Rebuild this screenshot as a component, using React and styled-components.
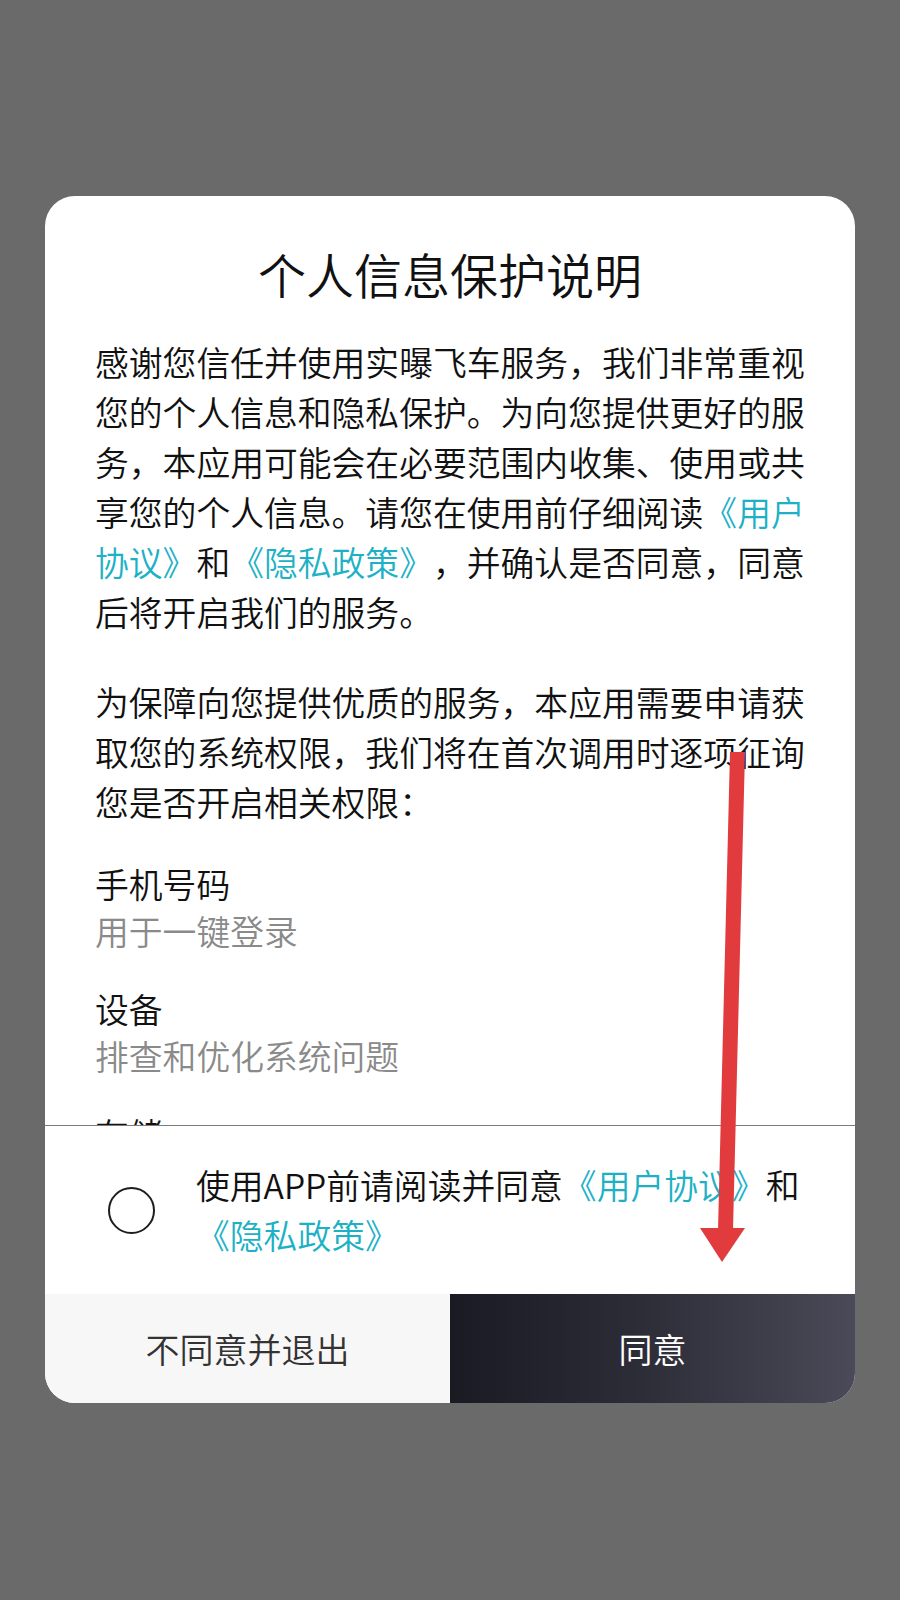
import React from "react";
import styled, { createGlobalStyle } from "styled-components";

const Global = createGlobalStyle`
  html, body { margin: 0; padding: 0; background: #6a6a6a; }
  body {
    font-family: "Noto Sans CJK SC", "Noto Sans", sans-serif;
    text-spacing-trim: space-all;
    font-feature-settings: "chws" 0, "halt" 0;
  }
  * { box-sizing: border-box; }
`;

const Page = styled.div`
  position: relative;
  width: 900px;
  height: 1600px;
  overflow: hidden;
  background: #6a6a6a;
  padding-top: 196px;
  padding-left: 45px;
`;

const Card = styled.div`
  width: 810px;
  height: 1207px;
  background: #fff;
  border-radius: 30px;
  overflow: hidden;
  display: flex;
  flex-direction: column;
`;

const Title = styled.h1`
  margin: 0;
  padding-top: 47px;
  font-size: 48px;
  line-height: 60px;
  font-weight: 350;
  color: #111;
  text-align: center;
`;

const Body = styled.div`
  margin-top: 34px;
  padding: 0 50px;
  height: 788px;
  overflow: hidden;
  flex-shrink: 0;
`;

const Para = styled.p`
  margin: ${(p) => (p.$first ? "0" : "40px")} 0 0;
  font-size: 33.8px;
  line-height: 50px;
  font-weight: 350;
  color: #111;
`;

const Link = styled.span`
  color: #1db1c6;
`;

const PermList = styled.div`
  margin-top: 33px;
  display: flex;
  flex-direction: column;
  gap: 31px;
`;

const PermItem = styled.div`
  display: flex;
  flex-direction: column;
`;

const PermName = styled.div`
  font-size: 33.8px;
  line-height: 47px;
  font-weight: 350;
  color: #111;
`;

const PermDesc = styled.div`
  font-size: 33.8px;
  line-height: 47px;
  font-weight: 350;
  color: #8a8a8a;
`;

const Divider = styled.div`
  height: 1px;
  background: #7c7c7c;
  flex-shrink: 0;
`;

const Footer = styled.div`
  flex: 1;
  display: flex;
  align-items: center;
  padding-left: 63px;
  padding-right: 50px;
  gap: 41px;
`;

const Radio = styled.div`
  width: 47px;
  height: 47px;
  border-radius: 50%;
  border: 2.5px solid #1e1e1e;
  flex-shrink: 0;
`;

const FooterText = styled.div`
  flex: 1;
  font-size: 33.8px;
  line-height: 50px;
  font-weight: 350;
  color: #111;
`;

const Buttons = styled.div`
  height: 109px;
  display: flex;
  flex-shrink: 0;
`;

const Button = styled.div`
  flex: 1;
  display: flex;
  align-items: center;
  justify-content: center;
  font-size: 34px;
  font-weight: 350;
  color: ${(p) => (p.$primary ? "#fff" : "#333")};
  background: ${(p) =>
    p.$primary ? "linear-gradient(90deg, #1a1a23 0%, #2c2c37 45%, #4a4a58 100%)" : "#f7f7f7"};
`;

const ArrowSvg = styled.svg`
  position: absolute;
  left: 695px;
  top: 748px;
  pointer-events: none;
`;

export default function App() {
  const perms = [
    ["手机号码", "用于一键登录"],
    ["设备", "排查和优化系统问题"],
    ["存储", "保存和读取应用数据"],
  ];
  return (
    <>
      <Global />
      <Page>
        <Card>
          <Title>个人信息保护说明</Title>
          <Body>
            <Para $first>
              感谢您信任并使用实曝飞车服务，我们非常重视您的个人信息和隐私保护。为向您提供更好的服务，本应用可能会在必要范围内收集、使用或共享您的个人信息。请您在使用前仔细阅读
              <Link>《用户协议》</Link>和<Link>《隐私政策》</Link>
              ，并确认是否同意，同意后将开启我们的服务。
            </Para>
            <Para>
              为保障向您提供优质的服务，本应用需要申请获取您的系统权限，我们将在首次调用时逐项征询您是否开启相关权限：
            </Para>
            <PermList>
              {perms.map(([n, d]) => (
                <PermItem key={n}>
                  <PermName>{n}</PermName>
                  <PermDesc>{d}</PermDesc>
                </PermItem>
              ))}
            </PermList>
          </Body>
          <Divider />
          <Footer>
            <Radio />
            <FooterText>
              使用APP前请阅读并同意<Link>《用户协议》</Link>和<Link>《隐私政策》</Link>
            </FooterText>
          </Footer>
          <Buttons>
            <Button>不同意并退出</Button>
            <Button $primary>同意</Button>
          </Buttons>
        </Card>
        <ArrowSvg width="56" height="520" viewBox="0 0 56 520">
          <polygon points="35,4 50,4 38,482 23,482" fill="#e23b3e" />
          <polygon points="5,480 50,480 27,514" fill="#e23b3e" />
        </ArrowSvg>
      </Page>
    </>
  );
}
